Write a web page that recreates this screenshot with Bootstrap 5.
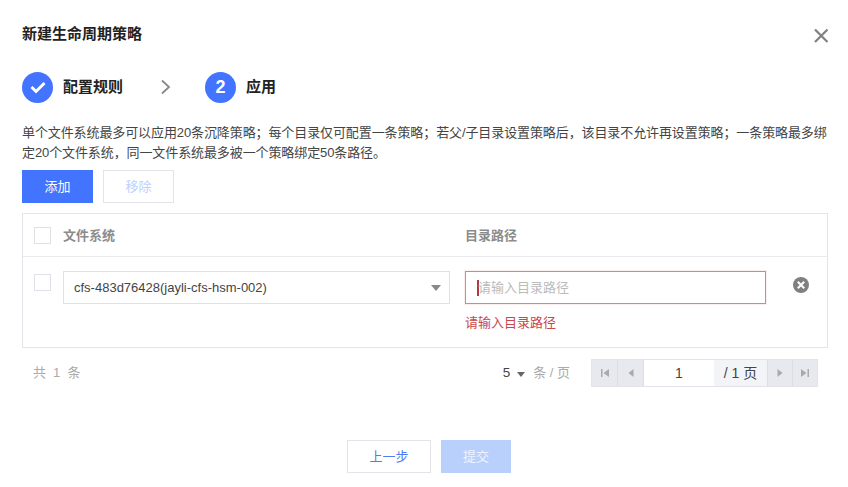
<!DOCTYPE html>
<html lang="zh"><head><meta charset="utf-8"><title>新建生命周期策略</title>
<link href="https://cdn.jsdelivr.net/npm/bootstrap@5.3.0/dist/css/bootstrap.min.css" rel="stylesheet">
<style>
html,body{height:100%}
body{font-family:"Liberation Sans","Noto Sans CJK SC",sans-serif;font-size:13px;color:#444;background:#fff;overflow:hidden}
.dlg{width:848px;height:487px;padding:24px 20px 0 22px}
.dlg-head{height:20px;margin-bottom:27px}
.dlg-title{font-size:15px;font-weight:700;color:#222;line-height:20px}
.dlg-close{margin-top:3px;width:16px;height:16px}
.stepper{height:32px;margin-bottom:20px}
.step-dot{width:31px;height:31px;border-radius:50%;background:#4274ff;color:#fff;font-size:18px;font-weight:700}
.step-name{font-size:15px;font-weight:700;color:#222;margin-left:10px}
.step-gap{width:82px;padding-left:38px}
.intro{line-height:20px;width:806px;margin-bottom:7px;color:#444;letter-spacing:-.1px}
.act{width:71px;height:33px;font-size:13px;border-radius:0;padding:0;line-height:31px}
.act-blue,.act-blue:disabled{background:#4274ff;border:1px solid #4274ff;color:#fff}
.act-off,.act-off:disabled{background:#fff;border:1px solid #e2e4ea;color:#bdd0ff;opacity:1}
.bar{margin-bottom:10px;gap:10px}
.tbl{width:806px;height:135px;border:1px solid #e3e5ea}
.tbl-head{height:43px;border-bottom:1px solid #e8eaee;color:#8c8c8c;font-weight:700}
.cell-a{width:40px;padding-left:11px}
.cell-a-low{padding-top:3px}
.cell-b{width:402px}
.cell-c{width:301px}
.head-text{padding-top:2px}
.tick{width:17px;height:17px;border:1px solid #dfe1e6;background:#fff;display:block}
.tbl-row{padding-top:14px}
.field{height:33px;border:1px solid #dfe1e6;padding:0 8px 0 10px;color:#444;background:#fff}
.pick{width:387px}
.caret-d{width:0;height:0;border-left:5px solid transparent;border-right:5px solid transparent;border-top:6px solid #888}
.field.field-bad{width:301px;border:1px solid #e57f81;box-shadow:0 0 0 1px #fbeeee;padding-left:11px;color:#bbb}
.cursor{width:2px;height:16px;background:#b03a3e;margin-right:-1px;flex:none}
.err-msg{color:#c9474b;margin-top:10px;line-height:18px}
.del{margin-left:26px;margin-top:5px}
.pager{height:28px;margin-top:11px;width:796px;padding-left:11px;color:#aaa}
.pager-total{word-spacing:3.5px}
.pager-size{color:#444;font-size:13.5px}
.mini-caret{width:0;height:0;border-left:4.5px solid transparent;border-right:4.5px solid transparent;border-top:5px solid #666;margin:3px 8px 0 7px}
.pgr{height:28px;border:1px solid #e2e4ea;margin-left:21px;background:#e7e9ee}
.pgr-btn{width:26px;height:26px;border-right:1px solid #dcdee4}
.pgr-btn2{width:25px;border-right:0;border-left:1px solid #dcdee4}
.pgr-num{width:70px;background:#fff;color:#444;font-size:14px}
.pgr-tot{width:53px;background:#f2f4f8;color:#444;font-size:14px}
.foot{margin-top:53px;padding-left:8px;gap:10px}
.foot-prev,.foot-prev:disabled{width:84px;height:33px;border:1px solid #e2e4ea;background:#fff;color:#4f7bf5;font-size:13px;border-radius:0;padding:0}
.foot-sub,.foot-sub:disabled{width:70px;height:33px;border:1px solid #b9cffc;background:#b9cffc;color:#eef3ff;font-size:13px;border-radius:0;padding:0;opacity:1}
</style></head>
<body>
<div class="dlg">
  <div class="dlg-head d-flex justify-content-between">
    <div class="dlg-title">新建生命周期策略</div>
    <svg class="dlg-close" viewBox="0 0 16 16"><path d="M3 2.500l12.500 12.500M15.500 2.500L3 15" stroke="#808080" stroke-width="2.200" fill="none"/></svg>
  </div>
  <div class="stepper d-flex align-items-center">
    <div class="step-dot d-flex align-items-center justify-content-center"><svg width="18" height="14" viewBox="0 0 18 14"><path d="M2.500 7l4.500 4.500L15.500 3" stroke="#fff" stroke-width="3" fill="none"/></svg></div>
    <div class="step-name">配置规则</div>
    <div class="step-gap d-flex"><svg width="10" height="16" viewBox="0 0 10 16"><path d="M1 1.500l7 6.500L1 14.500" stroke="#888" stroke-width="1.800" fill="none"/></svg></div>
    <div class="step-dot d-flex align-items-center justify-content-center">2</div>
    <div class="step-name">应用</div>
  </div>
  <div class="intro">单个文件系统最多可以应用20条沉降策略；每个目录仅可配置一条策略；若父/子目录设置策略后，该目录不允许再设置策略；一条策略最多绑定20个文件系统，同一文件系统最多被一个策略绑定50条路径。</div>
  <div class="bar d-flex">
    <button class="btn act act-blue" type="button">添加</button>
    <button class="btn act act-off" type="button" disabled>移除</button>
  </div>
  <div class="tbl">
    <div class="tbl-head d-flex align-items-center">
      <div class="cell-a"><span class="tick"></span></div>
      <div class="cell-b head-text">文件系统</div>
      <div class="cell-c head-text">目录路径</div>
    </div>
    <div class="tbl-row d-flex align-items-start">
      <div class="cell-a cell-a-low"><span class="tick"></span></div>
      <div class="cell-b"><div class="field pick d-flex align-items-center justify-content-between"><span>cfs-483d76428(jayli-cfs-hsm-002)</span><span class="caret-d"></span></div></div>
      <div class="cell-c">
        <div class="field field-bad d-flex align-items-center"><span class="cursor"></span><span>请输入目录路径</span></div>
        <div class="err-msg">请输入目录路径</div>
      </div>
      <svg class="del" width="18" height="18" viewBox="0 0 18 18"><circle cx="9" cy="9" r="8" fill="#808080"/><path d="M5.800 5.800l6.400 6.400M12.200 5.800l-6.400 6.400" stroke="#fff" stroke-width="2"/></svg>
    </div>
  </div>
  <div class="pager d-flex align-items-center justify-content-between">
    <span class="pager-total">共 1 条</span>
    <div class="d-flex align-items-center">
      <span class="pager-size">5</span><span class="mini-caret"></span><span>条 / 页</span>
      <div class="pgr d-flex">
        <div class="pgr-btn d-flex align-items-center justify-content-center"><svg width="10" height="10" viewBox="0 0 10 10"><path d="M1 1h1.500v8H1zM9 1v8L3.500 5z" fill="#aaa"/></svg></div>
        <div class="pgr-btn d-flex align-items-center justify-content-center"><svg width="10" height="10" viewBox="0 0 10 10"><path d="M7.500 1v8L2.500 5z" fill="#aaa"/></svg></div>
        <div class="pgr-num d-flex align-items-center justify-content-center">1</div>
        <div class="pgr-tot d-flex align-items-center justify-content-center">/ 1 页</div>
        <div class="pgr-btn pgr-btn2 d-flex align-items-center justify-content-center"><svg width="10" height="10" viewBox="0 0 10 10"><path d="M2.500 1v8L7.500 5z" fill="#aaa"/></svg></div>
        <div class="pgr-btn pgr-btn2 d-flex align-items-center justify-content-center"><svg width="10" height="10" viewBox="0 0 10 10"><path d="M9 1H7.500v8H9zM1 1v8L6.500 5z" fill="#aaa"/></svg></div>
      </div>
    </div>
  </div>
  <div class="foot d-flex justify-content-center">
    <button class="btn foot-prev" type="button">上一步</button>
    <button class="btn foot-sub" type="button" disabled>提交</button>
  </div>
</div>
<script src="https://cdn.jsdelivr.net/npm/bootstrap@5.3.0/dist/js/bootstrap.bundle.min.js"></script>
</body></html>
